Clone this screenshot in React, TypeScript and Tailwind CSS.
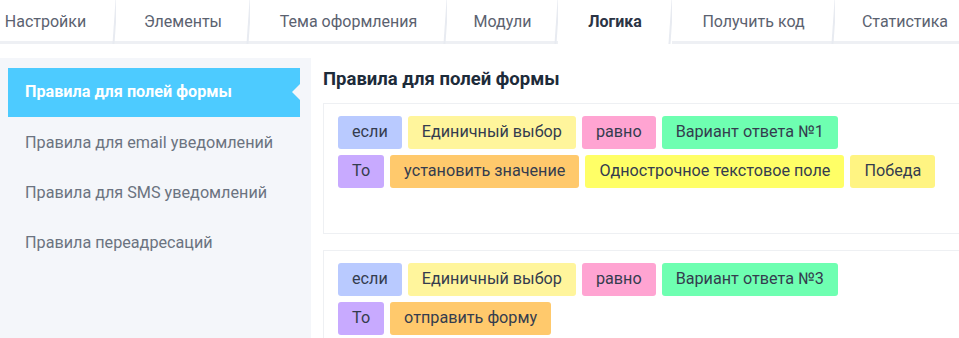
import React from 'react';

const tabs = [
  { label: 'Настройки', w: 'w-[141px] -ml-[25px]' },
  { label: 'Элементы', w: 'w-[134px]' },
  { label: 'Тема оформления', w: 'w-[197px]' },
  { label: 'Модули', w: 'w-[111px]' },
  { label: 'Логика', w: 'w-[114px]', active: true },
  { label: 'Получить код', w: 'w-[163px]' },
  { label: 'Статистика', w: 'w-[140px]' },
];

const sideItems = [
  'Правила для полей формы',
  'Правила для email уведомлений',
  'Правила для SMS уведомлений',
  'Правила переадресаций',
];

type Tag = { text: string; color: string };

function TagRow({ tags }: { tags: Tag[] }) {
  return (
    <div className="flex gap-[6px]">
      {tags.map((t, i) => (
        <span
          key={i}
          className={`h-[33px] flex items-center px-[14px] rounded-[3px] text-[16.2px] text-[#343c4e] whitespace-nowrap ${t.color}`}
        >
          {t.text}
        </span>
      ))}
    </div>
  );
}

const ifTags: Tag[] = [
  { text: 'если', color: 'bg-[#b9caff]' },
  { text: 'Единичный выбор', color: 'bg-[#fff59c]' },
  { text: 'равно', color: 'bg-[#ffa4d2]' },
];

export default function App() {
  return (
    <div className="w-[959px] h-[338px] overflow-hidden bg-white font-['Roboto',sans-serif]">
      {/* Tabs */}
      <div className="flex h-[44px] whitespace-nowrap">
        {tabs.map((t) => (
          <div key={t.label} className={`relative shrink-0 ${t.w} flex items-center justify-center`}>
            <div
              className={`absolute inset-0 ${t.active ? 'bg-white' : 'bg-white border-b-[3px] border-[#eef0f4]'}`}
            />
            <span
              className={`relative -mt-[1px] text-[16px] ${t.active ? 'font-bold text-[#2b3445]' : 'text-[#5b6270]'}`}
            >
              {t.label}
            </span>
            <div className="absolute right-0 top-0 h-[44px] w-[2px] bg-[#e8ebf1] -skew-x-[4deg]" />
          </div>
        ))}
      </div>

      <div className="flex mt-[14px] h-[280px]">
        {/* Sidebar */}
        <div className="w-[311px] shrink-0 bg-[#f4f6fa] pt-[10px] pl-[8px] pr-[11px]">
          {sideItems.map((s, i) =>
            i === 0 ? (
              <div key={s} className="relative h-[49px] bg-[#4dcbff] flex items-center pl-[17px] mb-[1px]">
                <span className="text-[16.2px] font-bold text-white">{s}</span>
                <div className="absolute right-0 top-[16px] w-0 h-0 border-y-[8px] border-y-transparent border-r-[8px] border-r-[#f4f6fa]" />
              </div>
            ) : (
              <div key={s} className="h-[50px] flex items-center pl-[17px]">
                <span className="text-[16.2px] text-[#6b7380]">{s}</span>
              </div>
            )
          )}
        </div>

        {/* Main */}
        <div className="flex-1 pl-[12px]">
          <h2 className="text-[18.5px] font-bold text-[#1d2b3a] mt-[10px] mb-[13px] leading-[22px]">
            Правила для полей формы
          </h2>
          <div className="border border-[#eef0f3] w-[660px] h-[131px] px-[14px] pt-[12px] flex flex-col gap-[6px]">
            <TagRow tags={[...ifTags, { text: 'Вариант ответа №1', color: 'bg-[#6effb1]' }]} />
            <TagRow
              tags={[
                { text: 'То', color: 'bg-[#c8aaff]' },
                { text: 'установить значение', color: 'bg-[#ffc96c]' },
                { text: 'Однострочное текстовое поле', color: 'bg-[#ffff66]' },
                { text: 'Победа', color: 'bg-[#fff482]' },
              ]}
            />
          </div>
          <div className="border border-[#eef0f3] w-[660px] h-[131px] mt-[16px] px-[14px] pt-[12px] flex flex-col gap-[6px]">
            <TagRow tags={[...ifTags, { text: 'Вариант ответа №3', color: 'bg-[#6effb1]' }]} />
            <TagRow
              tags={[
                { text: 'То', color: 'bg-[#c8aaff]' },
                { text: 'отправить форму', color: 'bg-[#ffc96c]' },
              ]}
            />
          </div>
        </div>
      </div>
    </div>
  );
}
